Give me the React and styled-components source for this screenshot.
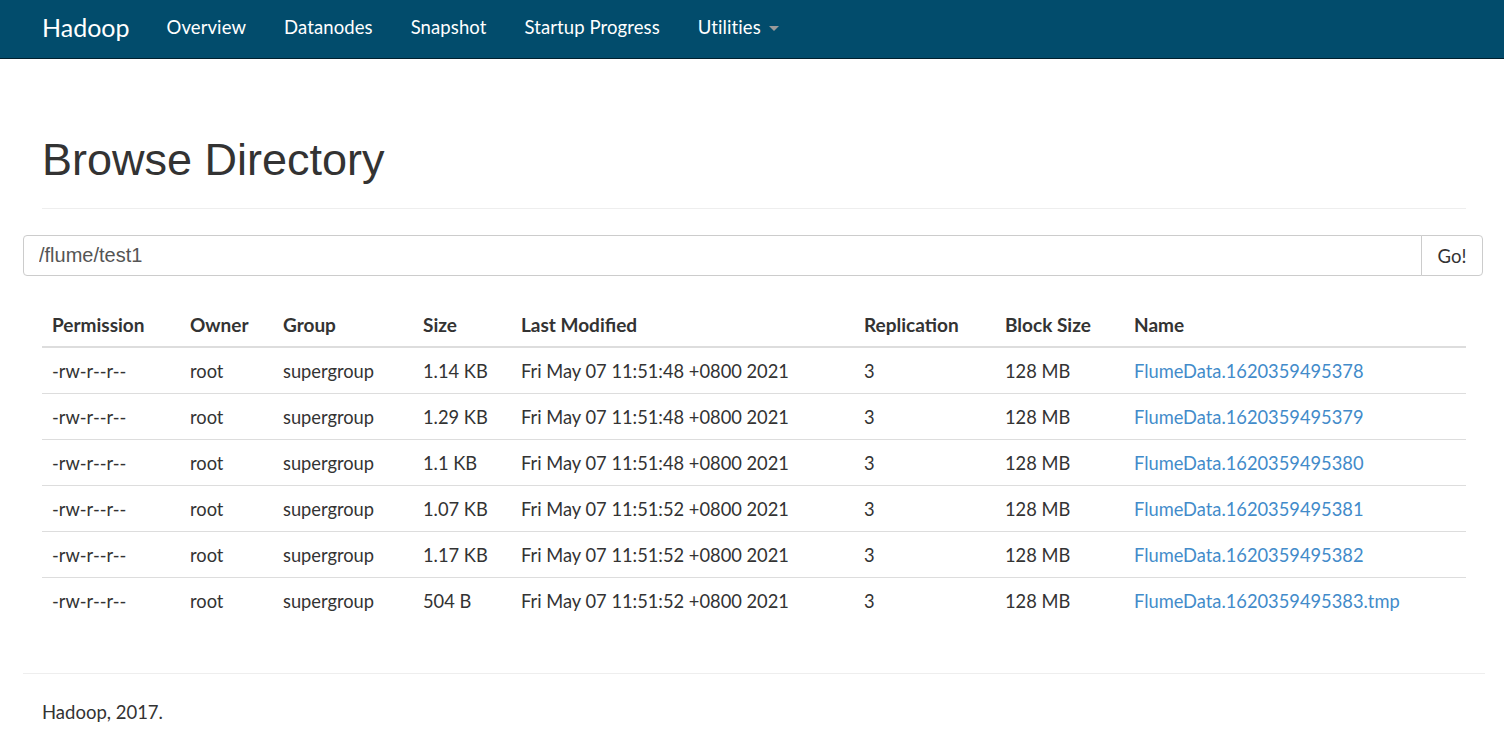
import React from 'react'
import styled, { createGlobalStyle } from 'styled-components'

const GlobalStyle = createGlobalStyle`
  html, body {
    margin: 0;
    padding: 0;
    background: #ffffff;
  }
  body {
    font-family: Lato, "Noto Sans CJK SC", sans-serif;
    font-size: 18px;
    color: #333333;
  }
`

const Navbar = styled.nav`
  height: 59px;
  box-sizing: border-box;
  padding: 0 0 4px 42px;
  background: #024c6c;
  border-bottom: 1px solid #01202e;
  display: flex;
  align-items: center;
`

const Brand = styled.a`
  color: #ffffff;
  font-size: 25px;
  margin-right: 37px;
  text-decoration: none;
`

const NavList = styled.ul`
  display: flex;
  list-style: none;
  margin: 0;
  padding: 0;
  gap: 38px;
`

const NavItem = styled.li`
  color: #ffffff;
  font-size: 18.5px;
  letter-spacing: 0.1px;
  display: flex;
  align-items: center;
`

const Caret = styled.span`
  display: inline-block;
  width: 0;
  height: 0;
  margin-left: 8px;
  margin-top: 2px;
  border-top: 5px solid #9a9a9a;
  border-left: 5px solid transparent;
  border-right: 5px solid transparent;
`

const Main = styled.main`
  padding: 0 38px 0 42px;
`

const PageHeader = styled.div`
  margin-top: 75px;
  padding-bottom: 23px;
  border-bottom: 1px solid #eeeeee;
`

const Title = styled.h1`
  margin: 0;
  font-family: "Liberation Sans", Arial, sans-serif;
  font-weight: 400;
  font-size: 45px;
  line-height: 51px;
  color: #333333;
`

const InputGroup = styled.div`
  display: flex;
  margin: 26px -17px 0 -19px;
  height: 41px;
`

const PathInput = styled.input`
  flex: 1;
  box-sizing: border-box;
  height: 41px;
  border: 1px solid #cccccc;
  border-radius: 4px 0 0 4px;
  padding: 0 15px;
  font-family: "Liberation Sans", Arial, sans-serif;
  font-size: 20px;
  color: #555555;
  outline: none;
`

const GoButton = styled.button`
  box-sizing: border-box;
  width: 62px;
  height: 41px;
  margin-left: -1px;
  border: 1px solid #cccccc;
  border-radius: 0 4px 4px 0;
  background: #ffffff;
  font-family: Lato, sans-serif;
  font-size: 18.5px;
  color: #333333;
  cursor: pointer;
`

const Table = styled.table`
  width: 100%;
  margin-top: 27px;
  border-collapse: collapse;
  table-layout: fixed;
`

const Th = styled.th`
  box-sizing: border-box;
  text-align: left;
  font-weight: 700;
  font-size: 19px;
  height: 44px;
  padding: 0 10px;
  border-bottom: 2px solid #dddddd;
  width: ${p => p.$w}px;
`

const Td = styled.td`
  font-size: 18.3px;
  height: 45px;
  padding: 0 10px;
  border-top: ${p => (p.$first ? 'none' : '1px solid #dddddd')};
  white-space: nowrap;
`

const FileLink = styled.a`
  color: #428bca;
  text-decoration: none;
`

const Footer = styled.footer`
  margin: 50px 19px 0 23px;
  border-top: 1px solid #eeeeee;
  padding: 27px 0 0 19px;
  font-size: 18.5px;
`

const columns = [
  ['Permission', 138],
  ['Owner', 93],
  ['Group', 140],
  ['Size', 98],
  ['Last Modified', 343],
  ['Replication', 141],
  ['Block Size', 129],
  ['Name', 342],
]

const files = [
  ['1.14 KB', 'Fri May 07 11:51:48 +0800 2021', 'FlumeData.1620359495378'],
  ['1.29 KB', 'Fri May 07 11:51:48 +0800 2021', 'FlumeData.1620359495379'],
  ['1.1 KB', 'Fri May 07 11:51:48 +0800 2021', 'FlumeData.1620359495380'],
  ['1.07 KB', 'Fri May 07 11:51:52 +0800 2021', 'FlumeData.1620359495381'],
  ['1.17 KB', 'Fri May 07 11:51:52 +0800 2021', 'FlumeData.1620359495382'],
  ['504 B', 'Fri May 07 11:51:52 +0800 2021', 'FlumeData.1620359495383.tmp'],
]

export default function App() {
  return (
    <>
      <GlobalStyle />
      <Navbar>
        <Brand href="#">Hadoop</Brand>
        <NavList>
          <NavItem>Overview</NavItem>
          <NavItem>Datanodes</NavItem>
          <NavItem>Snapshot</NavItem>
          <NavItem>Startup Progress</NavItem>
          <NavItem>
            Utilities
            <Caret />
          </NavItem>
        </NavList>
      </Navbar>
      <Main>
        <PageHeader>
          <Title>Browse Directory</Title>
        </PageHeader>
        <InputGroup>
          <PathInput defaultValue="/flume/test1" />
          <GoButton type="button">Go!</GoButton>
        </InputGroup>
        <Table>
          <thead>
            <tr>
              {columns.map(([label, w]) => (
                <Th key={label} $w={w}>
                  {label}
                </Th>
              ))}
            </tr>
          </thead>
          <tbody>
            {files.map(([size, date, name], i) => (
              <tr key={name}>
                <Td $first={i === 0}>-rw-r--r--</Td>
                <Td $first={i === 0}>root</Td>
                <Td $first={i === 0}>supergroup</Td>
                <Td $first={i === 0}>{size}</Td>
                <Td $first={i === 0}>{date}</Td>
                <Td $first={i === 0}>3</Td>
                <Td $first={i === 0}>128 MB</Td>
                <Td $first={i === 0}>
                  <FileLink href="#">{name}</FileLink>
                </Td>
              </tr>
            ))}
          </tbody>
        </Table>
      </Main>
      <Footer>Hadoop, 2017.</Footer>
    </>
  )
}
